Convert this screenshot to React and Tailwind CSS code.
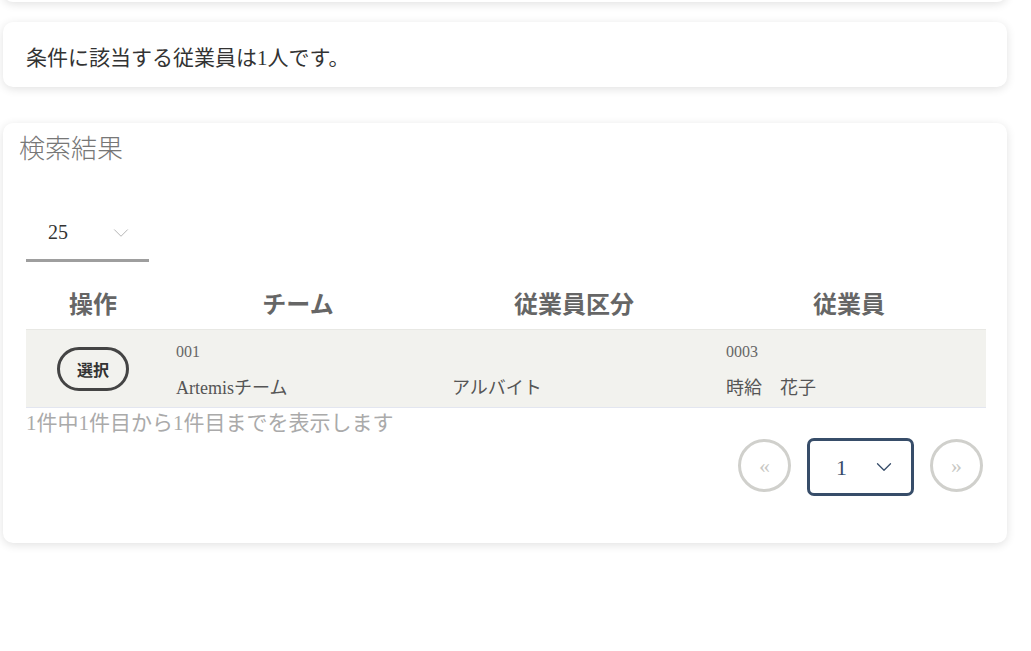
import { ChevronDown } from 'lucide-react';

const font = { fontFamily: '"Liberation Serif", "Noto Sans CJK JP", serif' };
const sans = { fontFamily: '"Noto Sans CJK JP", sans-serif' };

const Card = ({ className = '', children }) => (
  <div className={`ml-[3px] w-[1004px] bg-white rounded-[10px] shadow-[0_2px_10px_rgba(0,0,0,0.12)] ${className}`}>
    {children}
  </div>
);

export default function App() {
  return (
    <div className="min-h-[651px] bg-white overflow-hidden" style={font}>
      {/* previous card, mostly scrolled out */}
      <Card className="h-[40px] -mt-[38px]" />

      <Card className="mt-[20px] h-[65px] pl-[23px] pt-[22px]">
        <p className="text-[21px] leading-[28px] text-[#333]">条件に該当する従業員は1人です。</p>
      </Card>

      <Card className="mt-[36px] h-[420px] pt-[4px]">
        <h2 className="pl-[16px] text-[26px] leading-[40px] text-[#777]" style={{ ...sans, fontWeight: 300 }}>
          検索結果
        </h2>

        <div className="px-[23px]">
          {/* per page select */}
          <div className="mt-[51px] w-[123px] h-[44px] border-b-[3px] border-[#9e9e9e] flex items-start justify-between pl-[22px] pr-[15px]">
            <span className="pt-[2px] text-[20px] text-[#333] leading-[24px]">25</span>
            <ChevronDown size={26} strokeWidth={0.8} className="mt-[2px] text-[#aaa]" />
          </div>

          {/* table */}
          <div className="mt-[23px] w-[960px]">
            <div className="grid grid-cols-[134px_276px_276px_274px] h-[44px] pb-[8px] items-center text-[24px] font-bold text-[#666]" style={sans}>
              <div className="text-center">操作</div>
              <div className="text-center">チーム</div>
              <div className="text-center">従業員区分</div>
              <div className="text-center">従業員</div>
            </div>
            <div className="grid grid-cols-[134px_276px_276px_274px] h-[79px] bg-[#f2f2ee] border-t border-[#e8e8e4] border-b border-b-[#e3e6f0] text-[#555]">
              <div className="flex items-center justify-center">
                <button className="w-[72px] h-[44px] rounded-full border-[3px] border-[#444] text-[16px] font-bold text-[#333] flex items-center justify-center" style={sans}>
                  選択
                </button>
              </div>
              <div className="pl-[16px] pt-[12px]">
                <div className="text-[16px] leading-[20px] text-[#666]">001</div>
                <div className="mt-[15px] text-[18px] leading-[22px]">Artemisチーム</div>
              </div>
              <div className="pl-[16px] pt-[12px]">
                <div className="text-[16px] leading-[20px]">&nbsp;</div>
                <div className="mt-[15px] text-[18px] leading-[22px]">アルバイト</div>
              </div>
              <div className="pl-[14px] pt-[12px]">
                <div className="text-[16px] leading-[20px] text-[#666]">0003</div>
                <div className="mt-[15px] text-[18px] leading-[22px]">時給　花子</div>
              </div>
            </div>
          </div>

          <p className="text-[21px] leading-[30px] text-[#aaa]">1件中1件目から1件目までを表示します</p>

          {/* pagination */}
          <div className="flex justify-end items-start gap-[16px] w-[960px] pr-[3px]">
            <button className="mt-[1px] w-[53px] h-[53px] rounded-full border-[3px] border-[#d0d0cc] text-[#c8c8c4] text-[22px] flex items-center justify-center">«</button>
            <div className="w-[107px] h-[58px] rounded-[7px] border-[3px] border-[#374d69] flex items-center justify-between pl-[26px] pr-[14px] text-[#374d69]">
              <span className="text-[22px]">1</span>
              <ChevronDown size={26} strokeWidth={1.2} />
            </div>
            <button className="mt-[1px] w-[53px] h-[53px] rounded-full border-[3px] border-[#d0d0cc] text-[#c8c8c4] text-[22px] flex items-center justify-center">»</button>
          </div>
        </div>
      </Card>
    </div>
  );
}
